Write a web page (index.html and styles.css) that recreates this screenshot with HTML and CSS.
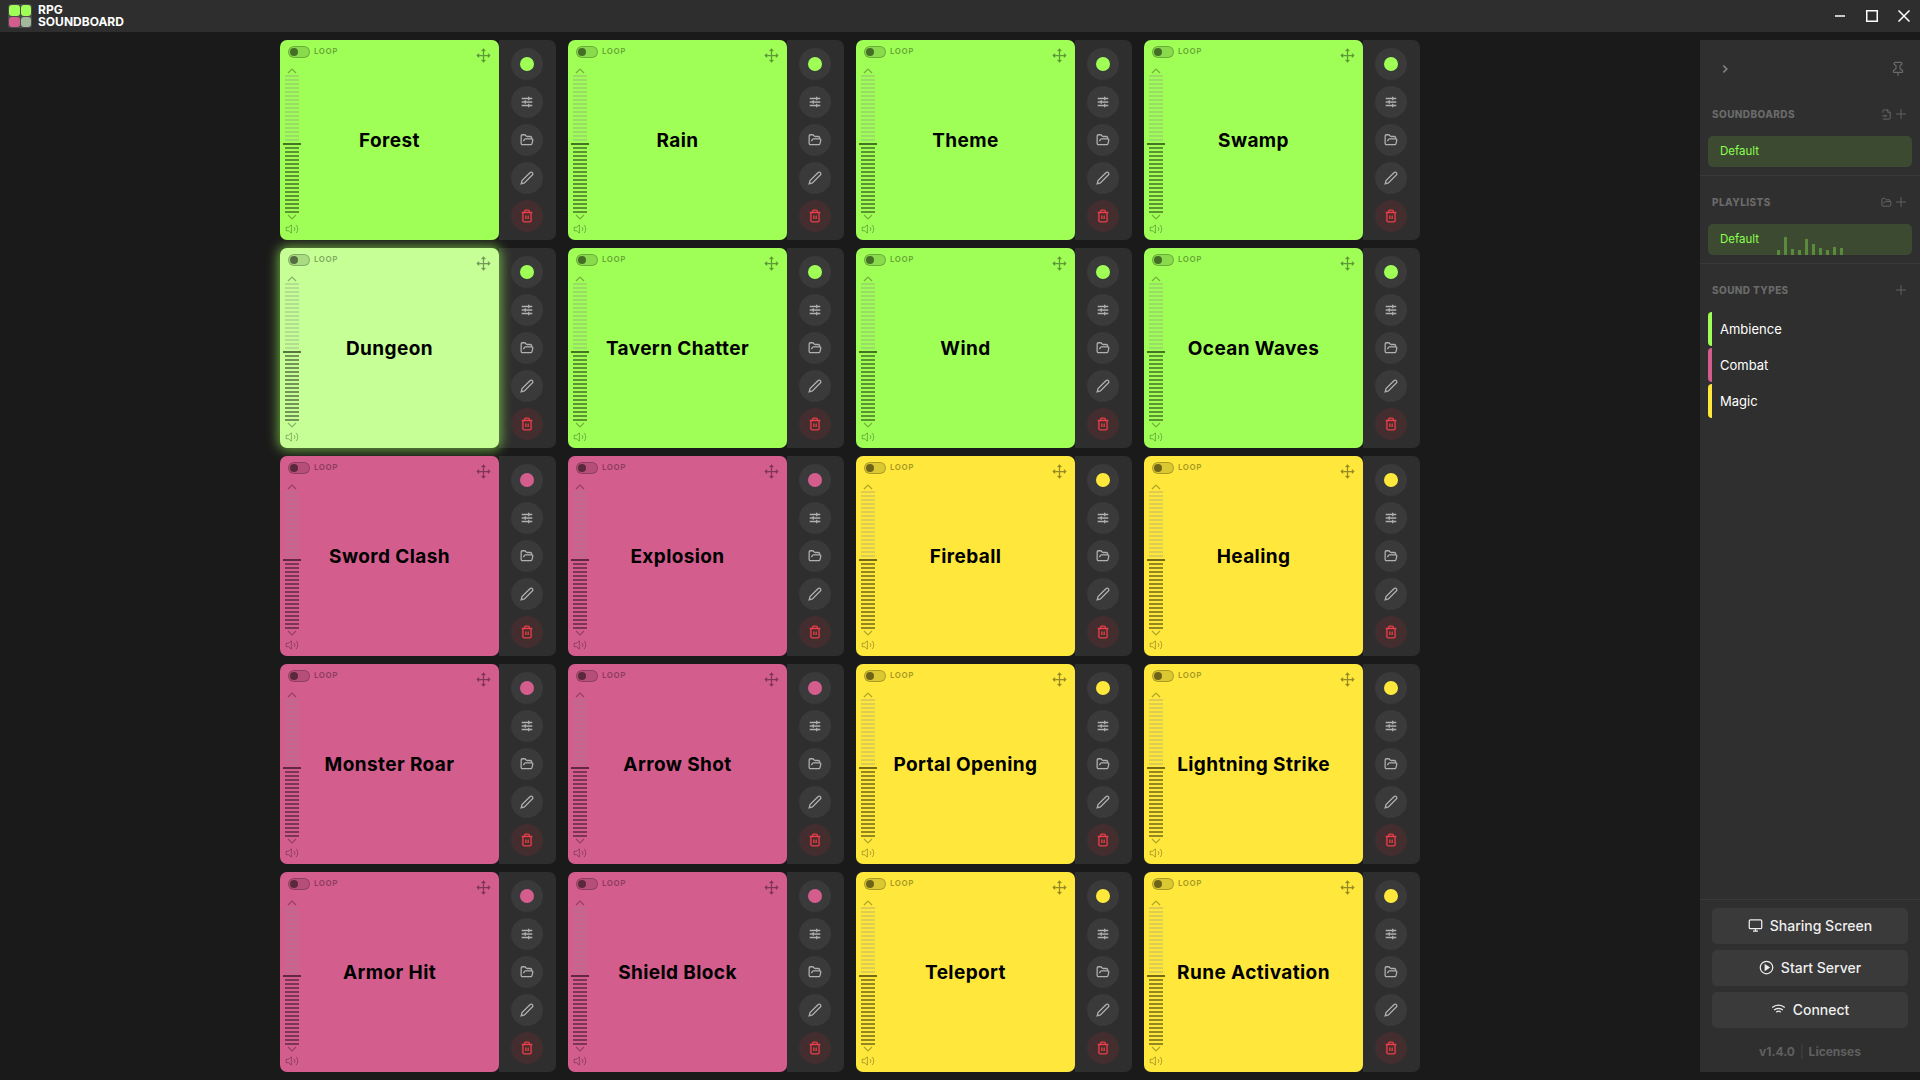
FILE: index.html
```html
<!DOCTYPE html>
<html lang="en">
<head>
  <meta charset="UTF-8" />
  <title>RPG Soundboard</title>
  <link rel="stylesheet" href="styles.css">
</head>
<body>

  <header class="titlebar">
    <div class="logo">
      <span class="logo-cell green"></span>
      <span class="logo-cell green"></span>
      <span class="logo-cell pink"></span>
      <span class="logo-cell pale"></span>
    </div>
    <div class="logo-text">RPG<br>SOUNDBOARD</div>
    <div class="window-controls">
      <svg viewBox="0 0 12 12"><path d="M1 6h10"/></svg>
      <svg viewBox="0 0 12 12"><path d="M.75.75h10.5v10.5H.75z"/></svg>
      <svg viewBox="0 0 12 12"><path d="M.5.5l11 11M11.500.5l-11 11"/></svg>
    </div>
  </header>

  <div class="content">
    <main class="main">
      <div class="board" id="board"></div>
    </main>

    <aside class="sidebar">
      <div class="side-top">
        <svg class="icon chevron-open" viewBox="0 0 24 24"><path d="m9 18 6-6-6-6"/></svg>
        <svg class="icon pin" viewBox="0 0 24 24"><path d="M12 17v5"/><path d="M9 10.760a2 2 0 0 1-1.110 1.790l-1.780.9A2 2 0 0 0 5 15.240V16a1 1 0 0 0 1 1h12a1 1 0 0 0 1-1v-.76a2 2 0 0 0-1.110-1.790l-1.780-.9A2 2 0 0 1 15 10.760V7a1 1 0 0 1 1-1 2 2 0 0 0 0-4H8a2 2 0 0 0 0 4 1 1 0 0 1 1 1z"/></svg>
      </div>

      <section class="side-section">
        <div class="side-head">
          <span>SOUNDBOARDS</span>
          <svg class="icon" viewBox="0 0 24 24"><path d="M4 22h14a2 2 0 0 0 2-2V7l-5-5H6a2 2 0 0 0-2 2v4"/><path d="M14 2v4a2 2 0 0 0 2 2h4"/><path d="M2 15h10"/><path d="m9 18 3-3-3-3"/></svg>
          <svg class="icon plus" viewBox="0 0 24 24"><path d="M12 2v20M2 12h20"/></svg>
        </div>
        <div class="side-item">Default</div>
      </section>

      <section class="side-section">
        <div class="side-head">
          <span>PLAYLISTS</span>
          <svg class="icon" viewBox="0 0 24 24"><path d="m6 14 1.500-2.900A2 2 0 0 1 9.240 10H20a2 2 0 0 1 1.940 2.500l-1.540 6a2 2 0 0 1-1.950 1.500H4a2 2 0 0 1-2-2V5a2 2 0 0 1 2-2h3.900a2 2 0 0 1 1.690.9l.81 1.200a2 2 0 0 0 1.670.9H18a2 2 0 0 1 2 2v2"/></svg>
          <svg class="icon plus" viewBox="0 0 24 24"><path d="M12 2v20M2 12h20"/></svg>
        </div>
        <div class="side-item">
          Default
          <div class="eq">
            <i style="height:5px"></i><i style="height:18px"></i><i style="height:6px"></i><i style="height:5px"></i><i style="height:16px"></i><i style="height:11px"></i><i style="height:7px"></i><i style="height:5px"></i><i style="height:8px"></i><i style="height:7px"></i>
          </div>
        </div>
      </section>

      <section class="side-section types">
        <div class="side-head">
          <span>SOUND TYPES</span>
          <svg class="icon plus" viewBox="0 0 24 24"><path d="M12 2v20M2 12h20"/></svg>
        </div>
        <div class="type-row green">Ambience</div>
        <div class="type-row pink">Combat</div>
        <div class="type-row yellow">Magic</div>
      </section>

      <div class="side-bottom">
        <button class="side-btn">
          <svg viewBox="0 0 24 24"><rect x="2" y="3" width="20" height="14" rx="2"/><path d="M8 21h8M12 17v4"/></svg>
          Sharing Screen
        </button>
        <button class="side-btn">
          <svg viewBox="0 0 24 24"><circle cx="12" cy="12" r="10"/><path class="solid" d="M10 8l6 4-6 4z"/></svg>
          Start Server
        </button>
        <button class="side-btn">
          <svg viewBox="0 0 24 24"><path d="M12 20h.01"/><path d="M2 8.820a15 15 0 0 1 20 0"/><path d="M5 12.860a10 10 0 0 1 14 0"/><path d="M8.500 16.430a5 5 0 0 1 7 0"/></svg>
          Connect
        </button>
        <div class="version">v1.4.0 <span class="sep">|</span> Licenses</div>
      </div>
    </aside>
  </div>

  <script src="script.js"></script>
</body>
</html>
```

FILE: styles.css
```css
* {
  margin: 0;
  padding: 0;
  box-sizing: border-box;
}
html, body {
  height: 100%;
}
body {
  background: #1a1a1a;
  color: #fff;
  font-family: Inter, "Noto Sans", sans-serif;
  overflow: hidden;
  display: flex;
  flex-direction: column;
}
.green { --type: #9fff57; }
.pink { --type: #d35d8d; }
.yellow { --type: #ffe83b; }

/* title bar */
.titlebar {
  height: 32px;
  background: #2e2e2e;
  display: flex;
  align-items: center;
  padding-left: 8px;
}
.logo {
  width: 24px;
  height: 24px;
  padding: 1px;
  background: #4a4a4a;
  border-radius: 3px;
  display: grid;
  grid-template-columns: 1fr 1fr;
  gap: 1px;
}
.logo-cell {
  background: var(--type);
  border-radius: 3px;
}
.logo-cell.pale { background: #a3b79a; }
.logo-text {
  margin-left: 6px;
  font-size: 12px;
  font-weight: 700;
  line-height: 12px;
}
.window-controls {
  margin-left: auto;
  display: flex;
  gap: 20px;
  padding-right: 10px;
}
.window-controls svg {
  width: 12px;
  height: 12px;
  fill: none;
  stroke: #fff;
  stroke-width: 1.500;
}

/* main board */
.content {
  flex: 1;
  display: flex;
  padding-top: 8px;
  padding-bottom: 8px;
  min-height: 0;
}
.main {
  flex: 1;
  display: flex;
  justify-content: center;
}
.board {
  display: grid;
  grid-template-columns: repeat(4, 276px);
  grid-auto-rows: 200px;
  column-gap: 12px;
  row-gap: 8px;
}
.cell {
  display: flex;
}
.card {
  position: relative;
  width: 219px;
  background: var(--type);
  border-radius: 7px;
  padding: 6px 8px 0 3px;
}
.card.playing {
  background: #c5ff95;
  box-shadow: 0 0 12px 2px rgba(160, 255, 88, 0.6);
}
.card-title {
  position: absolute;
  inset: 0;
  display: flex;
  align-items: center;
  justify-content: center;
  color: #000;
  font-size: 19px;
  font-weight: 700;
  letter-spacing: 0.4px;
}
.card-top {
  display: flex;
  align-items: center;
  height: 12px;
  padding-left: 5px;
  position: relative;
  z-index: 1;
}
.toggle {
  width: 22px;
  height: 12px;
  border-radius: 6px;
  background: rgba(0, 0, 0, 0.14);
  border: 1px solid rgba(0, 0, 0, 0.22);
  padding: 1px;
}
.toggle i {
  display: block;
  width: 8px;
  height: 8px;
  border-radius: 50%;
  background: rgba(0, 0, 0, 0.5);
}
.loop {
  margin-left: 4px;
  margin-bottom: 2px;
  font-size: 8px;
  font-weight: 700;
  letter-spacing: 0.5px;
  color: rgba(0, 0, 0, 0.35);
}
.move {
  margin-left: auto;
  margin-top: 6px;
  width: 15px;
  height: 15px;
  fill: none;
  stroke: rgba(0, 0, 0, 0.4);
  stroke-width: 2;
}
.fader {
  width: 18px;
  margin-top: 9px;
  position: relative;
  z-index: 1;
}
.fader-arrow {
  display: block;
  width: 10px;
  height: 8px;
  margin-left: 4px;
  fill: none;
  stroke: rgba(0, 0, 0, 0.3);
  stroke-width: 1.200;
}
.rail {
  width: 14px;
  margin-left: 2px;
}
.rail-top {
  height: 68px;
  background: repeating-linear-gradient(to bottom, rgba(140, 140, 140, 0.3) 0 2px, transparent 2px 4px);
}
.rail-low {
  height: 66px;
  margin-top: 2px;
  background: repeating-linear-gradient(to bottom, rgba(0, 0, 0, 0.42) 0 2px, transparent 2px 4px);
}
.thumb {
  height: 2px;
  background: rgba(0, 0, 0, 0.55);
}
.speaker {
  display: block;
  width: 14px;
  height: 14px;
  margin-left: 2px;
  margin-top: 1px;
  fill: none;
  stroke: rgba(0, 0, 0, 0.35);
  stroke-width: 1.500;
}

/* buttons beside each card */
.actions {
  width: 57px;
  background: #2e2e2e;
  border-radius: 0 7px 7px 0;
  padding: 8px 0 8px 12px;
  display: flex;
  flex-direction: column;
  gap: 6px;
}
.act {
  width: 32px;
  height: 32px;
  border-radius: 50%;
  background: #3a3a3a;
  display: flex;
  align-items: center;
  justify-content: center;
}
.act svg {
  width: 14px;
  height: 14px;
  fill: none;
  stroke: #b0b0b0;
  stroke-width: 2.200;
}
.act.del { background: #432d2f; }
.act.del svg { stroke: #ef3f48; }
.dot {
  width: 14px;
  height: 14px;
  border-radius: 50%;
  background: var(--type);
}

/* sidebar */
.sidebar {
  width: 220px;
  background: #2f2f2f;
  display: flex;
  flex-direction: column;
}
.icon {
  width: 11px;
  height: 11px;
  fill: none;
  stroke: #6a6a6a;
  stroke-width: 2;
}
.icon.plus {
  width: 12px;
  height: 12px;
  stroke-width: 1.600;
}
.side-top {
  display: flex;
  align-items: center;
  justify-content: space-between;
  height: 58px;
  padding: 0 14px 0 18px;
}
.side-top .chevron-open {
  width: 14px;
  height: 14px;
  stroke: #808080;
  stroke-width: 3;
}
.side-top .pin {
  width: 16px;
  height: 16px;
  stroke-width: 1.800;
}
.side-section {
  padding: 0 8px 8px;
  border-bottom: 1px solid #3a3a3a;
  margin-bottom: 10px;
}
.side-section.types {
  border-bottom: none;
}
.side-head {
  display: flex;
  align-items: center;
  gap: 3px;
  height: 28px;
  padding: 0 5px 0 4px;
  color: #6a6a6a;
  font-size: 10px;
  font-weight: 800;
  letter-spacing: 0.4px;
  margin-top: 2px;
}
.side-head span {
  margin-right: auto;
}
.side-item {
  position: relative;
  height: 31px;
  margin-top: 8px;
  border-radius: 5px;
  background: #3b4a30;
  color: #8cff4e;
  font-size: 11.500px;
  line-height: 31px;
  padding-left: 12px;
}
.eq {
  position: absolute;
  left: 69px;
  bottom: 0;
  display: flex;
  align-items: flex-end;
  gap: 4px;
}
.eq i {
  display: block;
  width: 3px;
  background: #5b8a3c;
}
.type-row {
  height: 34px;
  margin-bottom: 2px;
  line-height: 34px;
  padding-left: 8px;
  border-left: 4px solid var(--type);
  border-radius: 4px 0 0 4px;
  font-size: 13px;
  color: #fff;
}
.side-head + .type-row {
  margin-top: 8px;
}
.side-bottom {
  margin-top: auto;
  padding: 8px 12px 0;
  border-top: 1px solid #3a3a3a;
  display: flex;
  flex-direction: column;
  gap: 6px;
  height: 173px;
}
.side-btn {
  height: 36px;
  border: none;
  border-radius: 5px;
  background: #3a3a3a;
  color: #eee;
  font-family: inherit;
  font-size: 14px;
  font-weight: 500;
  padding-bottom: 1px;
  display: flex;
  align-items: center;
  justify-content: center;
  gap: 7px;
}
.side-btn svg {
  width: 15px;
  height: 15px;
  fill: none;
  stroke: #eee;
  stroke-width: 2;
}
.side-btn .solid {
  fill: #eee;
}
.version {
  margin-top: 10px;
  text-align: center;
  color: #606060;
  font-size: 12px;
  font-weight: 700;
}
.version .sep {
  color: #444;
  font-weight: 400;
  margin: 0 2px;
}
```

FILE: script.js
```js
// sound slots, row by row
const sounds = [
  ["Forest", "green"], ["Rain", "green"], ["Theme", "green"], ["Swamp", "green"],
  ["Dungeon", "green", true], ["Tavern Chatter", "green"], ["Wind", "green"], ["Ocean Waves", "green"],
  ["Sword Clash", "pink"], ["Explosion", "pink"], ["Fireball", "yellow"], ["Healing", "yellow"],
  ["Monster Roar", "pink"], ["Arrow Shot", "pink"], ["Portal Opening", "yellow"], ["Lightning Strike", "yellow"],
  ["Armor Hit", "pink"], ["Shield Block", "pink"], ["Teleport", "yellow"], ["Rune Activation", "yellow"]
];

const icons = {
  move: '<path d="M5 9l-3 3 3 3M9 5l3-3 3 3M15 19l-3 3-3-3M19 9l3 3-3 3M2 12h20M12 2v20"/>',
  sliders: '<path d="M3 6h18M3 12h18M3 18h18M15 3v6M9 9v6M15 15v6"/>',
  folder: '<path d="m6 14 1.500-2.900A2 2 0 0 1 9.240 10H20a2 2 0 0 1 1.940 2.500l-1.540 6a2 2 0 0 1-1.950 1.500H4a2 2 0 0 1-2-2V5a2 2 0 0 1 2-2h3.900a2 2 0 0 1 1.690.9l.81 1.200a2 2 0 0 0 1.670.9H18a2 2 0 0 1 2 2v2"/>',
  pencil: '<path d="M17 3a2.850 2.830 0 1 1 4 4L7.500 20.500 2 22l1.500-5.500Z"/>',
  trash: '<path d="M3 6h18M19 6v14c0 1-1 2-2 2H7c-1 0-2-1-2-2V6M8 6V4c0-1 1-2 2-2h4c1 0 2 1 2 2v2M10 11v6M14 11v6"/>',
  speaker: '<path d="M11 5 6 9H2v6h4l5 4zM15.500 8.500a5 5 0 0 1 0 7M19 5a10 10 0 0 1 0 14"/>'
};

function svg(cls, name) {
  return `<svg class="${cls}" viewBox="0 0 24 24">${icons[name]}</svg>`;
}

const board = document.getElementById("board");

sounds.forEach(([name, type, playing]) => {
  const cell = document.createElement("div");
  cell.className = `cell ${type}`;
  cell.innerHTML = `
    <div class="card${playing ? " playing" : ""}">
      <div class="card-title">${name}</div>
      <div class="card-top">
        <div class="toggle"><i></i></div>
        <span class="loop">LOOP</span>
        ${svg("move", "move")}
      </div>
      <div class="fader">
        <svg class="fader-arrow up" viewBox="0 0 10 8"><path d="M1 6l4-4 4 4"/></svg>
        <div class="rail rail-top"></div>
        <div class="thumb"></div>
        <div class="rail rail-low"></div>
        <svg class="fader-arrow" viewBox="0 0 10 8"><path d="M1 2l4 4 4-4"/></svg>
        ${svg("speaker", "speaker")}
      </div>
    </div>
    <div class="actions">
      <div class="act"><span class="dot"></span></div>
      <div class="act">${svg("", "sliders")}</div>
      <div class="act">${svg("", "folder")}</div>
      <div class="act">${svg("", "pencil")}</div>
      <div class="act del">${svg("", "trash")}</div>
    </div>`;
  board.appendChild(cell);
});
```
